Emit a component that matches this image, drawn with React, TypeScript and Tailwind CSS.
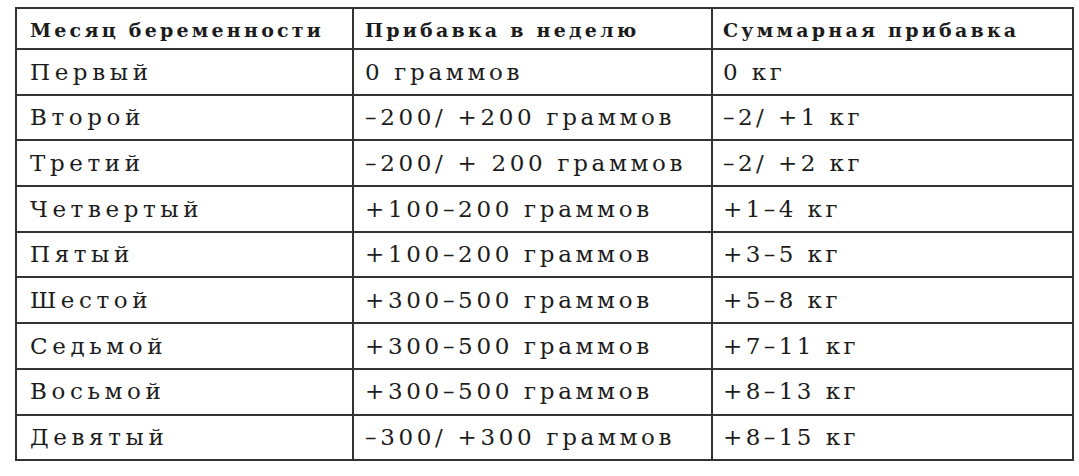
import React from 'react';

const rows: [string, string, string][] = [
	['Первый', '0 граммов', '0 кг'],
	['Второй', '–200/ +200 граммов', '–2/ +1 кг'],
	['Третий', '–200/ + 200 граммов', '–2/ +2 кг'],
	['Четвертый', '+100–200 граммов', '+1–4 кг'],
	['Пятый', '+100–200 граммов', '+3–5 кг'],
	['Шестой', '+300–500 граммов', '+5–8 кг'],
	['Седьмой', '+300–500 граммов', '+7–11 кг'],
	['Восьмой', '+300–500 граммов', '+8–13 кг'],
	['Девятый', '–300/ +300 граммов', '+8–15 кг'],
];

export default function App() {
	return (
		<div className="w-[1079px] h-[476px] bg-white pl-[15px] pt-[7px] text-[#1c1c1c] font-['DejaVu_Serif','Liberation_Serif',serif]">
			<table className="table-fixed border-collapse w-[1059px] border-2 border-[#333]">
				<colgroup>
					<col className="w-[337px]" />
					<col className="w-[359px]" />
					<col />
				</colgroup>
				<thead>
					<tr className="h-[41px]">
						<th className="border-2 border-[#333] pl-[13px] pt-[3px] text-left align-middle text-[19px] font-bold tracking-[0.17em] whitespace-nowrap">
							Месяц беременности
						</th>
						<th className="border-2 border-[#333] pl-[11px] pt-[3px] text-left align-middle text-[19px] font-bold tracking-[0.17em] whitespace-nowrap">
							Прибавка в неделю
						</th>
						<th className="border-2 border-[#333] pl-[10px] pt-[3px] text-left align-middle text-[19px] font-bold tracking-[0.17em] whitespace-nowrap">
							Суммарная прибавка
						</th>
					</tr>
				</thead>
				<tbody>
					{rows.map(([month, week, total]) => (
						<tr
							key={month}
							className="h-[45.7px]"
						>
							<td className="border-2 border-[#333] pl-[13px] align-middle text-[23px] tracking-[0.2em] whitespace-nowrap">{month}</td>
							<td className="border-2 border-[#333] pl-[11px] align-middle text-[23px] tracking-[0.16em] whitespace-nowrap">{week}</td>
							<td className="border-2 border-[#333] pl-[10px] align-middle text-[23px] tracking-[0.15em] whitespace-nowrap">{total}</td>
						</tr>
					))}
				</tbody>
			</table>
		</div>
	);
}
